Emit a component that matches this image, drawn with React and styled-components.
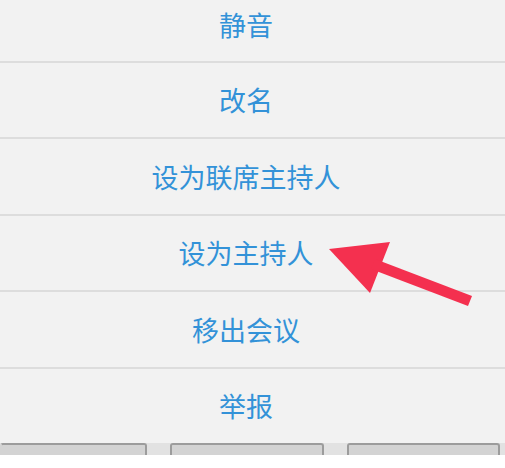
import React from 'react';
import styled, { createGlobalStyle } from 'styled-components';

const GlobalStyle = createGlobalStyle`
    html, body {
        margin: 0;
        padding: 0;
        background: #f2f2f2;
        overflow: hidden;
    }
`;

const Page = styled.div`
    position: relative;
    width: 505px;
    height: 468px;
    overflow: hidden;
    display: flex;
    flex-direction: column;
    font-family: "Noto Sans CJK SC", "Noto Sans", sans-serif;
`;

const Sheet = styled.div`
    display: flex;
    flex-direction: column;
    margin-top: -14px;
`;

const Row = styled.div`
    box-sizing: border-box;
    height: ${props => props.last ? '74.5px' : '76.5px'};
    display: flex;
    align-items: center;
    justify-content: center;
    padding-right: 13px;
    padding-top: ${props => props.first ? '2px' : '0'};
    border-bottom: ${props => props.last ? 'none' : '2px solid #dddddd'};
    color: #3392d8;
    font-size: 27px;
`;

const Keyboard = styled.div`
    height: 12px;
    background: #e2e2e2;
    display: grid;
    grid-template-columns: 147px 154px 153px;
    column-gap: 23px;
`;

const Key = styled.div`
    background: #d3d3d3;
    border: 2px solid #9c9c9c;
    border-bottom: none;
    border-radius: 3px 3px 0 0;
    border-left-color: ${props => props.edge ? '#d3d3d3' : '#9c9c9c'};
`;

const Footer = styled.div`
    flex: 1;
    background: #ffffff;
`;

const Arrow = styled.svg`
    position: absolute;
    left: 0;
    top: 0;
    pointer-events: none;
`;

const items = ['静音', '改名', '设为联席主持人', '设为主持人', '移出会议', '举报'];

const App = () => {
    return (
        <Page>
            <GlobalStyle />
            <Sheet>
                {items.map((item, i) => (
                    <Row key={item} first={i === 0} last={i === items.length - 1}>{item}</Row>
                ))}
            </Sheet>
            <Keyboard>
                <Key edge />
                <Key />
                <Key />
            </Keyboard>
            <Footer />
            <Arrow width="505" height="468" viewBox="0 0 505 468">
                <polygon points="329,249 390,242 370,293" fill="#f4304f" />
                <polygon points="375,259 472,296 468,306 371,269" fill="#f4304f" />
            </Arrow>
        </Page>
    );
}

export default App;
